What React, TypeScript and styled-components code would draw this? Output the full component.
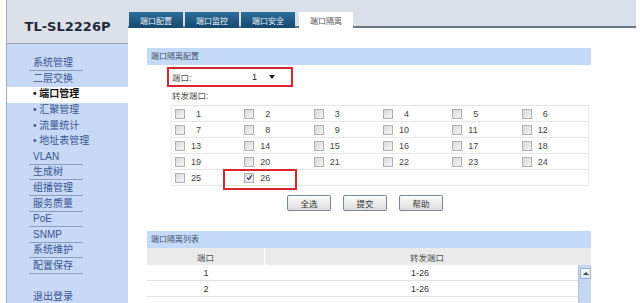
import React from 'react';
import styled, { createGlobalStyle } from 'styled-components';

const GlobalStyle = createGlobalStyle`
  html, body { margin: 0; padding: 0; background: #fff; }
  body { font-family: "Liberation Sans", "Noto Sans CJK SC", sans-serif; }
  * { box-sizing: border-box; }
`;

const Page = styled.div`
  display: flex;
  width: 640px;
  height: 303px;
  padding-left: 6px;
  overflow: hidden;
`;

const Sidebar = styled.div`
  width: 122px;
  flex-shrink: 0;
  display: flex;
  flex-direction: column;
  border-left: 1px solid #a7aeb8;
`;

const SideHead = styled.div`
  height: 44px;
  flex-shrink: 0;
  display: flex;
  align-items: center;
  justify-content: center;
  padding-top: 10px;
  background: #dde2ea;
  border-bottom: 1px solid #9ba4b1;
`;

const Logo = styled.div`
  font-family: "DejaVu Sans", sans-serif;
  font-weight: bold;
  font-size: 13px;
  color: #1f2b3a;
`;

const Menu = styled.div`
  flex: 1;
  background: #c7d9f6;
  padding-top: 12px;
`;

const MenuItem = styled.div<{ $active?: boolean; $gap?: boolean }>`
  height: 15.6px;
  display: flex;
  align-items: center;
  padding-left: 22px;
  margin-top: ${p => (p.$gap ? '15px' : '0')};
  background: ${p => (p.$active ? '#fff' : 'transparent')};
  font-size: 10px;
  font-weight: ${p => (p.$active ? 'bold' : 'normal')};
  color: ${p => (p.$active ? '#111' : '#3a5590')};
`;

const ItemText = styled.span<{ $line?: boolean }>`
  display: inline-block;
  min-width: 54px;
  padding-left: 4px;
  line-height: 14px;
  white-space: nowrap;
  border-bottom: 1px solid ${p => (p.$line ? '#8b9dbd' : 'transparent')};
`;

const Main = styled.div`
  flex: 1;
  min-width: 0;
  display: flex;
  flex-direction: column;
`;

const TopBar = styled.div`
  height: 28px;
  flex-shrink: 0;
  margin-right: 4px;
  display: flex;
  align-items: flex-end;
  gap: 2px;
  padding-left: 1px;
  background: #d9e0ea;
  border-bottom: 2px solid #6b7888;
`;

const Tab = styled.div<{ $active?: boolean }>`
  width: 54px;
  height: 16px;
  margin-bottom: -2px;
  margin-left: ${p => (p.$active ? '2px' : '0')};
  display: flex;
  align-items: center;
  justify-content: center;
  font-size: 8px;
  color: ${p => (p.$active ? '#555' : '#e8eef5')};
  background: ${p => (p.$active ? '#fff' : 'linear-gradient(#2d6e9b, #17486e)')};
`;

const Content = styled.div`
  padding: 20px 0 0 19px;
`;

const Panel = styled.div<{ $top?: number }>`
  width: 444px;
  margin-top: ${p => p.$top ?? 0}px;
`;

const PanelHead = styled.div`
  height: 17px;
  line-height: 17px;
  padding-left: 4px;
  background: #c5d9f8;
  font-size: 8px;
  color: #46536d;
`;

const PortRow = styled.div`
  width: 126px;
  height: 20px;
  margin: 2px 0 0 20px;
  display: flex;
  align-items: center;
  padding-left: 3px;
  border: 2px solid #d8262f;
  font-size: 8.5px;
  color: #555;
`;

const PortLabel = styled.span`
  width: 80px;
`;

const PortValue = styled.span`
  font-size: 9px;
  color: #222;
`;

const Caret = styled.span`
  margin-left: 12px;
  width: 0;
  height: 0;
  border-left: 3px solid transparent;
  border-right: 3px solid transparent;
  border-top: 4px solid #222;
`;

const FieldLabel = styled.div`
  height: 18px;
  line-height: 18px;
  padding-left: 25px;
  font-size: 8.5px;
  color: #555;
`;

const PortGrid = styled.div`
  width: 418px;
  margin-left: 24px;
  display: grid;
  grid-template-columns: repeat(6, 1fr);
  border-top: 1px solid #e4e4e4;
  border-left: 1px solid #ececec;
  border-right: 1px solid #ececec;
`;

const Cell = styled.div<{ $mark?: boolean }>`
  position: relative;
  height: 16px;
  display: flex;
  align-items: center;
  gap: 6px;
  padding-left: 3px;
  border-bottom: 1px solid #e6e6e6;
  font-size: 9px;
  color: #444;

  ${p =>
    p.$mark &&
    `&::after {
      content: '';
      position: absolute;
      left: -18px;
      top: -1px;
      width: 70px;
      height: 17px;
      border: 2px solid #d8262f;
    }`}
`;

const Box = styled.span<{ $checked?: boolean }>`
  width: 10px;
  height: 10px;
  flex-shrink: 0;
  display: flex;
  align-items: center;
  justify-content: center;
  border: 1px solid #b0b0b0;
  background: ${p => (p.$checked ? 'linear-gradient(135deg, #d6dbe4, #f4f6f9)' : 'linear-gradient(135deg, #d9d9d9, #f6f6f6)')};
`;

const Num = styled.span<{ $pad?: boolean }>`
  padding-left: ${p => (p.$pad ? '5px' : '0')};
`;

const Buttons = styled.div`
  display: flex;
  gap: 12px;
  margin-top: 9px;
  padding-left: 140px;
`;

const Button = styled.div`
  width: 44px;
  height: 16px;
  display: flex;
  align-items: center;
  justify-content: center;
  border: 1px solid #7d8896;
  border-radius: 2px;
  background: linear-gradient(#fcfcfc, #dcdcdc);
  font-size: 8.5px;
  color: #333;
`;

const ListHead = styled.div`
  height: 17px;
  display: grid;
  grid-template-columns: 118px 1fr;
  background: #ebebeb;
  font-size: 8.5px;
  color: #555;
`;

const HeadCell = styled.div<{ $left?: boolean }>`
  display: flex;
  align-items: center;
  justify-content: ${p => (p.$left ? 'flex-start' : 'center')};
  padding-left: ${p => (p.$left ? '145px' : '0')};
  border-right: ${p => (p.$left ? 'none' : '1px solid #fff')};
`;

const ListBody = styled.div`
  display: flex;
  height: 40px;
`;

const Rows = styled.div`
  flex: 1;
`;

const Row = styled.div`
  height: 16px;
  display: grid;
  grid-template-columns: 118px 1fr;
  border-bottom: 1px solid #e2e2e2;
  font-size: 9px;
  color: #333;
`;

const RowCell = styled.div<{ $left?: boolean }>`
  display: flex;
  align-items: center;
  justify-content: ${p => (p.$left ? 'flex-start' : 'center')};
  padding-left: ${p => (p.$left ? '146px' : '0')};
`;

const ScrollBar = styled.div`
  width: 13px;
  padding: 3px 0 0 1px;
  background: #c3d7f4;
  border-left: 1px solid #b3c6e2;
`;

const ScrollUp = styled.div`
  height: 11px;
  display: flex;
  align-items: center;
  justify-content: center;
  background: linear-gradient(#f4f7fb, #dce6f4);
  border: 1px solid #9cb0cf;

  &::before {
    content: '';
    border-left: 3px solid transparent;
    border-right: 3px solid transparent;
    border-bottom: 3px solid #3b4a60;
  }
`;

const menu = [
  { label: '系统管理', line: true },
  { label: '二层交换' },
  { label: '• 端口管理', active: true },
  { label: '• 汇聚管理' },
  { label: '• 流量统计' },
  { label: '• 地址表管理' },
  { label: 'VLAN', line: true },
  { label: '生成树', line: true },
  { label: '组播管理', line: true },
  { label: '服务质量', line: true },
  { label: 'PoE', line: true },
  { label: 'SNMP', line: true },
  { label: '系统维护', line: true },
  { label: '配置保存', line: true },
];

const tabs = ['端口配置', '端口监控', '端口安全', '端口隔离'];
const ports = Array.from({ length: 26 }, (_, i) => i + 1);
const isolation = [1, 2];

const Check = () => (
  <svg width="7" height="7" viewBox="0 0 7 7">
    <path d="M1 3.6 L2.8 5.4 L6 1.2" fill="none" stroke="#2f3b52" strokeWidth="1.2" />
  </svg>
);

const App = () => {
  return (
    <>
      <GlobalStyle />
      <Page>
        <Sidebar>
          <SideHead>
            <Logo>TL-SL2226P</Logo>
          </SideHead>
          <Menu>
            {menu.map(m => (
              <MenuItem key={m.label} $active={m.active}>
                <ItemText $line={m.line}>{m.label}</ItemText>
              </MenuItem>
            ))}
            <MenuItem $gap>
              <ItemText>退出登录</ItemText>
            </MenuItem>
          </Menu>
        </Sidebar>

        <Main>
          <TopBar>
            {tabs.map((t, i) => (
              <Tab key={t} $active={i === 3}>
                {t}
              </Tab>
            ))}
          </TopBar>

          <Content>
            <Panel>
              <PanelHead>端口隔离配置</PanelHead>
              <PortRow>
                <PortLabel>端口:</PortLabel>
                <PortValue>1</PortValue>
                <Caret />
              </PortRow>
              <FieldLabel>转发端口:</FieldLabel>
              <PortGrid>
                {ports.map(n => (
                  <Cell key={n} $mark={n === 26}>
                    <Box $checked={n === 26}>{n === 26 && <Check />}</Box>
                    <Num $pad={n < 10}>{n}</Num>
                  </Cell>
                ))}
                {[1, 2, 3, 4].map(n => (
                  <Cell key={`e${n}`} />
                ))}
              </PortGrid>
              <Buttons>
                <Button>全选</Button>
                <Button>提交</Button>
                <Button>帮助</Button>
              </Buttons>
            </Panel>

            <Panel $top={20}>
              <PanelHead>端口隔离列表</PanelHead>
              <ListHead>
                <HeadCell>端口</HeadCell>
                <HeadCell $left>转发端口</HeadCell>
              </ListHead>
              <ListBody>
                <Rows>
                  {isolation.map(n => (
                    <Row key={n}>
                      <RowCell>{n}</RowCell>
                      <RowCell $left>1-26</RowCell>
                    </Row>
                  ))}
                </Rows>
                <ScrollBar>
                  <ScrollUp />
                </ScrollBar>
              </ListBody>
            </Panel>
          </Content>
        </Main>
      </Page>
    </>
  );
};

export default App;
